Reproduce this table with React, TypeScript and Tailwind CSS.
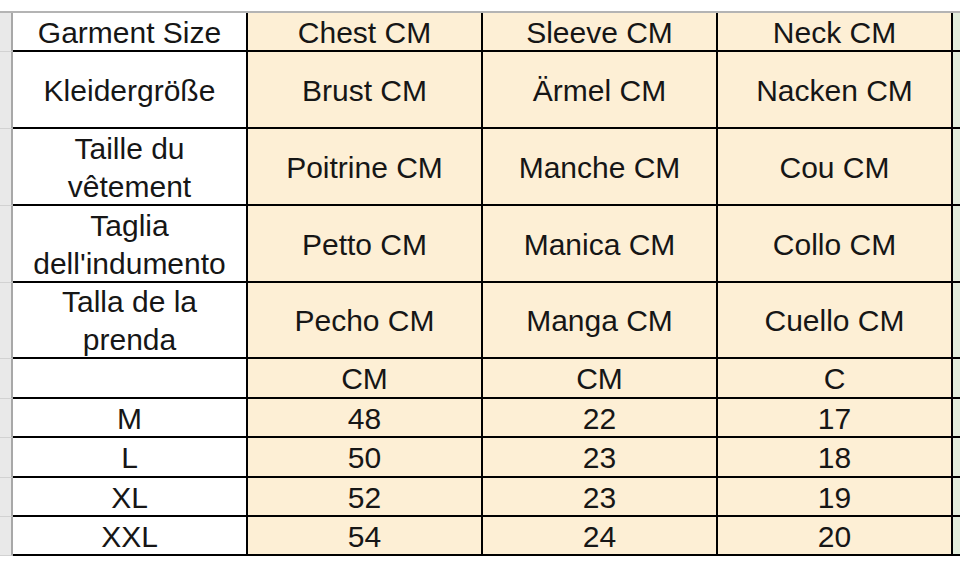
const rows: { h: string; size: React.ReactNode; cols: React.ReactNode[] }[] = [
  { h: "h-[39px]", size: "Garment Size", cols: ["Chest CM", "Sleeve CM", "Neck CM"] },
  { h: "h-[77px]", size: "Kleidergröße", cols: ["Brust CM", "Ärmel CM", "Nacken CM"] },
  {
    h: "h-[77px]",
    size: (
      <>
        Taille du
        <br />
        vêtement
      </>
    ),
    cols: ["Poitrine CM", "Manche CM", "Cou CM"],
  },
  {
    h: "h-[77px]",
    size: (
      <>
        Taglia
        <br />
        dell'indumento
      </>
    ),
    cols: ["Petto CM", "Manica CM", "Collo CM"],
  },
  {
    h: "h-[76px]",
    size: (
      <>
        Talla de la
        <br />
        prenda
      </>
    ),
    cols: ["Pecho CM", "Manga CM", "Cuello CM"],
  },
  { h: "h-[40px]", size: "", cols: ["CM", "CM", "C"] },
  { h: "h-[39px]", size: "M", cols: ["48", "22", "17"] },
  { h: "h-[40px]", size: "L", cols: ["50", "23", "18"] },
  { h: "h-[39px]", size: "XL", cols: ["52", "23", "19"] },
  { h: "h-[39px]", size: "XXL", cols: ["54", "24", "20"] },
];

export default function App() {
  return (
    <div className="w-[960px] h-[576px] overflow-hidden bg-white font-['Liberation_Sans',Arial,sans-serif] text-[30px] leading-[38px] text-[#161616]">
      <div className="mt-[11px] border-t-2 border-[#b4b4b4] flex flex-col">
        {rows.map((row, i) => (
          <div key={i} className={`flex ${row.h}`}>
            {/* row header gutter */}
            <div className="w-[13px] shrink-0 bg-[#e9e9e9] border-r-2 border-[#a8a8a8] border-b border-b-[#d2d2d2]" />
            {/* size column */}
            <div className="w-[235px] shrink-0 bg-white border-r-2 border-b-2 border-black flex items-center justify-center text-center pt-[2px]">
              {row.size}
            </div>
            {row.cols.map((c, j) => (
              <div
                key={j}
                className="w-[235px] shrink-0 bg-[#fdefd5] border-r-2 border-b-2 border-black flex items-center justify-center text-center pt-[2px]"
              >
                {c}
              </div>
            ))}
            {/* next column, cut off */}
            <div className="flex-1 bg-[#e2eddb] border-b-2 border-black" />
          </div>
        ))}
      </div>
    </div>
  );
}
